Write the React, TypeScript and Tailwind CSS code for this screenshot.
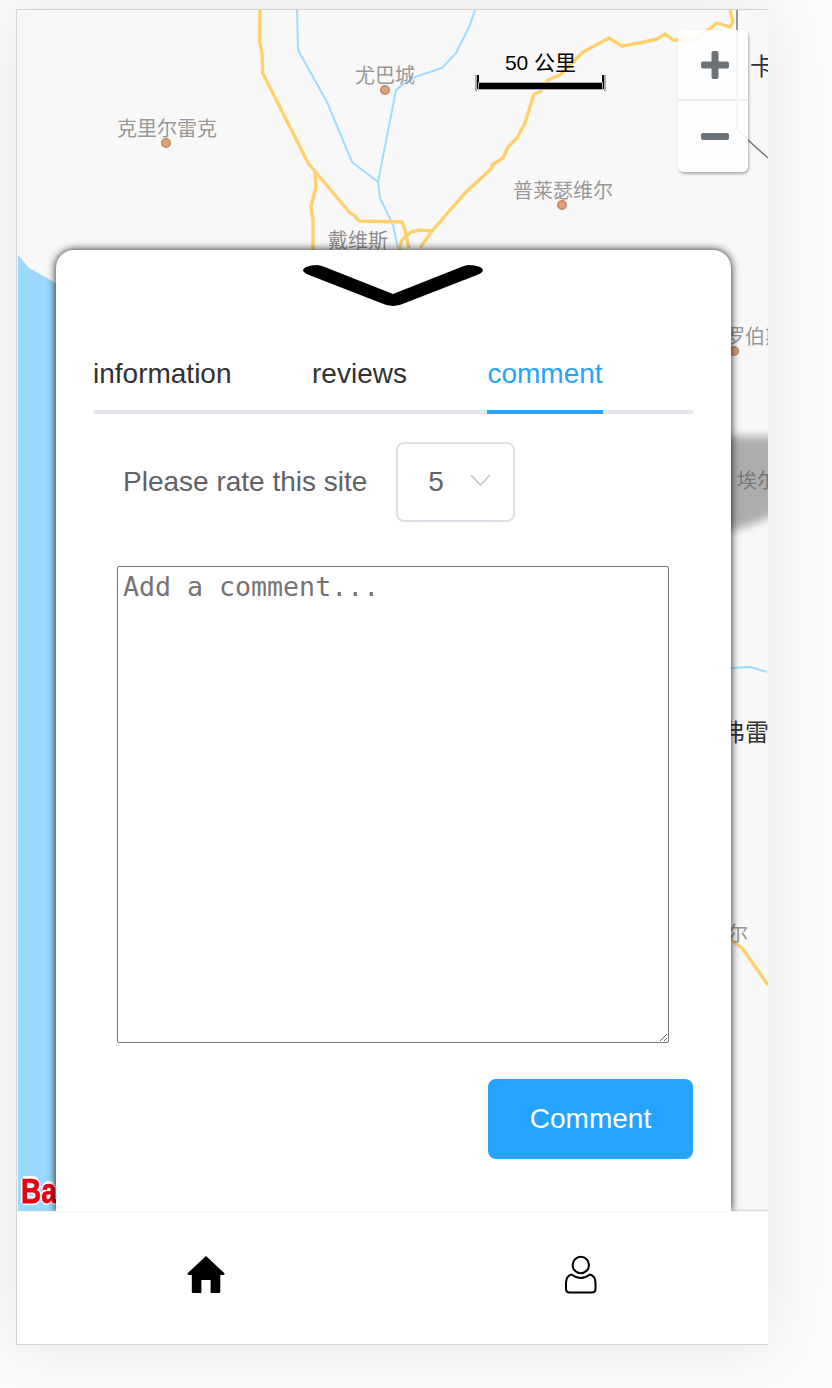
const labels = [
  { t: "克里尔雷克", x: 117, y: 128, s: 20, c: "#999999" },
  { t: "尤巴城", x: 355, y: 75, s: 20, c: "#999999" },
  { t: "普莱瑟维尔", x: 513, y: 190, s: 20, c: "#999999" },
  { t: "戴维斯", x: 328, y: 240, s: 20, c: "#8f8f8f" },
  { t: "罗伯斯", x: 725, y: 336, s: 20, c: "#999999" },
  { t: "埃尔", x: 737, y: 480, s: 20, c: "#777777" },
  { t: "弗雷", x: 721, y: 731, s: 24, c: "#333333" },
  { t: "尔", x: 728, y: 933, s: 20, c: "#999999" },
  { t: "卡", x: 750, y: 65, s: 24, c: "#333333" },
];

const dots = [
  [166, 143],
  [385, 90],
  [562, 205],
  [734, 351],
];

function MapDrawing() {
  return (
    <svg className="absolute inset-0 h-full w-full" viewBox="17 10 751 1201" fill="none">
      <defs>
        <filter id="blob" x="-30%" y="-30%" width="160%" height="160%">
          <feGaussianBlur stdDeviation="4" />
        </filter>
      </defs>
      <polygon points="18,255 29,268 56,283 56,1211 18,1211" fill="#9ad8fd" />
      <path d="M600 436 L790 436 L790 505 Q760 526 720 533 L600 536 Z" fill="#adadad" filter="url(#blob)" />
      <g stroke="#9fdcff" strokeWidth="2" strokeLinejoin="round">
        <polyline points="297,10 298,50 327,102 352,162 378,182 380,198 393,225 398,248" />
        <polyline points="378,182 396,90 402,85 415,77 442,68 456,53 470,25 475,10" />
        <polyline points="731,668 750,667 767,672" />
      </g>
      <g stroke="#ffd06e" strokeWidth="3.4" strokeLinejoin="round">
        <polyline points="260,10 259.7,42 262,53 262.7,73 308,163 350,213 354,215 359,221 402,222 405,230 409,248" />
        <polyline points="315,173 316,187 311,207 313,220 313,250" />
        <polyline points="399,250 402,240 411,232 420,230 432,231 465,193 492,168 492,165 503,158 508,147 517,138 525,123 534,94 540,92 548,80 560,75 583,52 609,38 622,46 640,43 657,39 665,34 673,40 695,40 717,23 730,27 733,22 730,10" />
        <polyline points="432,231 420,248" />
        <polyline points="731,940 742,948 768,985" />
      </g>
      <polyline points="737,10 737,130 768,158" stroke="#777777" strokeWidth="1.5" />
      <line x1="731" y1="1210.2" x2="768" y2="1210.2" stroke="#dddddd" strokeWidth="1.6" />
      {dots.map(([x, y]) => (
        <circle key={x} cx={x} cy={y} r="4.2" fill="#dba282" stroke="#c98658" strokeWidth="1.6" />
      ))}
    </svg>
  );
}

function ScaleBar() {
  return (
    <div className="absolute left-[458px] top-[40px] flex w-[131px] flex-col items-center">
      <div className="text-[21px] leading-[26px] text-black">50 公里</div>
      <div className="mt-[-1px] flex h-[16px] w-[131px] flex-col justify-end border-x-[2px] border-[#aaaaaa] pb-[2px]">
        <div className="flex h-full flex-col justify-end border-x-[2px] border-black">
          <div className="h-[6px] bg-black shadow-[0_0_0_1px_#aaaaaa]" />
        </div>
      </div>
    </div>
  );
}

function ZoomControl() {
  return (
    <div className="absolute left-[661px] top-[20px] flex h-[142px] w-[70px] flex-col rounded-[6px] bg-white/90 shadow-[1px_2px_3px_rgba(0,0,0,0.3)]">
      <div className="flex h-[71px] items-center justify-center border-b-[2px] border-[#eeeeee] pl-[3px]">
        <svg width="28" height="28" viewBox="0 0 28 28" fill="#6b7278">
          <rect x="0" y="10.5" width="28" height="7" rx="2" />
          <rect x="10.5" y="0" width="7" height="28" rx="2" />
        </svg>
      </div>
      <div className="flex flex-1 items-center justify-center pb-[1px] pl-[3px]">
        <svg width="28" height="7" viewBox="0 0 28 7" fill="#6b7278">
          <rect x="0" y="0" width="28" height="7" rx="2" />
        </svg>
      </div>
    </div>
  );
}

function HomeIcon() {
  return (
    <svg width="40" height="40" viewBox="0 0 40 40" fill="#000000">
      <path d="M20 1 L38.4 18.2 Q39 20 37 20 L34.3 20 L34.3 36.5 Q34.3 38 33 38 L25 38 Q24.6 38 24.6 37.5 L24.6 25 L15.4 25 L15.4 37.5 Q15.4 38 15 38 L7 38 Q5.8 38 5.8 36.5 L5.8 20 L3 20 Q1 20 1.6 18.2 Z" />
    </svg>
  );
}

function UserIcon() {
  return (
    <svg width="32" height="40" viewBox="0 0 32 40" fill="none" stroke="#000000" strokeWidth="2">
      <circle cx="15.8" cy="10" r="8.2" />
      <path d="M6.5 19.5 Q11 23 15.8 23 Q20.5 23 25 19.5 Q30.5 21 30.5 28 L30.5 33.5 Q30.5 37.5 27 37.5 L4.5 37.5 Q1 37.5 1 33.5 L1 28 Q1 21 6.5 19.5 Z" />
    </svg>
  );
}

export default function App() {
  return (
    <div className="h-[1388px] overflow-hidden bg-[#fbfbfb] pl-[16px] pt-[9px] font-['Liberation_Sans','Noto_Sans_CJK_SC',sans-serif]">
      <div className="flex h-[1336px] w-[752px] flex-col overflow-hidden border-y border-l border-[#d4d4d4] bg-white shadow-[0_0_60px_rgba(0,0,0,0.09)]">
        <div className="relative h-[1201px] overflow-hidden bg-[#f8f8f8]">
          <MapDrawing />
          {labels.map((l) => (
            <span
              key={l.t}
              className="absolute whitespace-nowrap font-['Noto_Sans_CJK_SC',sans-serif]"
              style={{ left: l.x - 17, top: l.y - 10 - l.s * 0.7, fontSize: l.s, lineHeight: `${l.s * 1.4}px`, color: l.c }}
            >
              {l.t}
            </span>
          ))}
          <ScaleBar />
          <ZoomControl />
          <div className="absolute left-[4px] top-[1165px] origin-top scale-y-[1.25] text-[28px] font-bold leading-[26px] text-[#e60012] [-webkit-text-stroke:0.6px_#e60012] [text-shadow:2px_0_0_#fff,-2px_0_0_#fff,0_2px_0_#fff,0_-2px_0_#fff]">
            Baidu
          </div>

          <div className="absolute bottom-0 left-[39px] top-[240px] flex w-[675px] flex-col rounded-t-[18px] bg-white pl-[37px] pr-[38px] shadow-[0_0_8px_rgba(0,0,0,0.9)]">
            <svg className="mt-[15px] self-center" width="182" height="41" viewBox="0 0 182 41" fill="#000000">
              <path d="M1.5 6.5 Q0 4 4 2 Q9 0 15 0 Q19 0 24 2.5 L91 29 L158 2.5 Q163 0 167 0 Q173 0 178 2 Q182 4 180.5 6.5 Q179 8.5 175 10 L103 38 Q91 44 79 38 L7 10 Q3 8.5 1.5 6.5 Z" />
            </svg>

            <div className="mt-[44px] flex h-[64px] gap-[80.5px] border-b-4 border-[#e4e7ed] text-[28px] leading-[48px] text-[#303133]">
              <div className="h-[64px]">information</div>
              <div className="h-[64px]">reviews</div>
              <div className="h-[64px] border-b-4 border-[#24a3ff] text-[#24a3ff]">comment</div>
            </div>

            <div className="mt-[28px] flex items-center pl-[30px] text-[28px] text-[#606266]">
              <span>Please rate this site</span>
              <div className="ml-[29px] flex h-[80px] w-[119px] items-center rounded-[8px] border-2 border-[#dcdfe6] pl-[30px]">
                <span>5</span>
                <svg className="mb-[4px] ml-[26px]" width="21" height="12" viewBox="0 0 21 12" fill="none" stroke="#c0c4cc" strokeWidth="1.6">
                  <polyline points="1,1 10.5,11 20,1" />
                </svg>
              </div>
            </div>

            <textarea
              className="ml-[24px] mt-[44px] h-[477px] w-[552px] rounded-[2px] border border-[#767676] pb-[2px] pl-[5px] pr-[2px] pt-[4px] font-['DejaVu_Sans_Mono',monospace] text-[26.6px] leading-[32px] placeholder:text-[#757575]"
              placeholder="Add a comment..."
            />

            <button className="mt-[36px] h-[80px] w-[205px] self-end rounded-[8px] bg-[#24a3ff] text-[28px] text-white">
              Comment
            </button>
          </div>
        </div>

        <div className="relative z-10 flex flex-1 border-t border-[#f5f5f5] bg-white">
          <div className="flex w-[376px] items-center justify-center pb-[7px] pl-[2px]">
            <HomeIcon />
          </div>
          <div className="flex w-[375px] items-center justify-center pb-[7px]">
            <UserIcon />
          </div>
        </div>
      </div>
    </div>
  );
}
